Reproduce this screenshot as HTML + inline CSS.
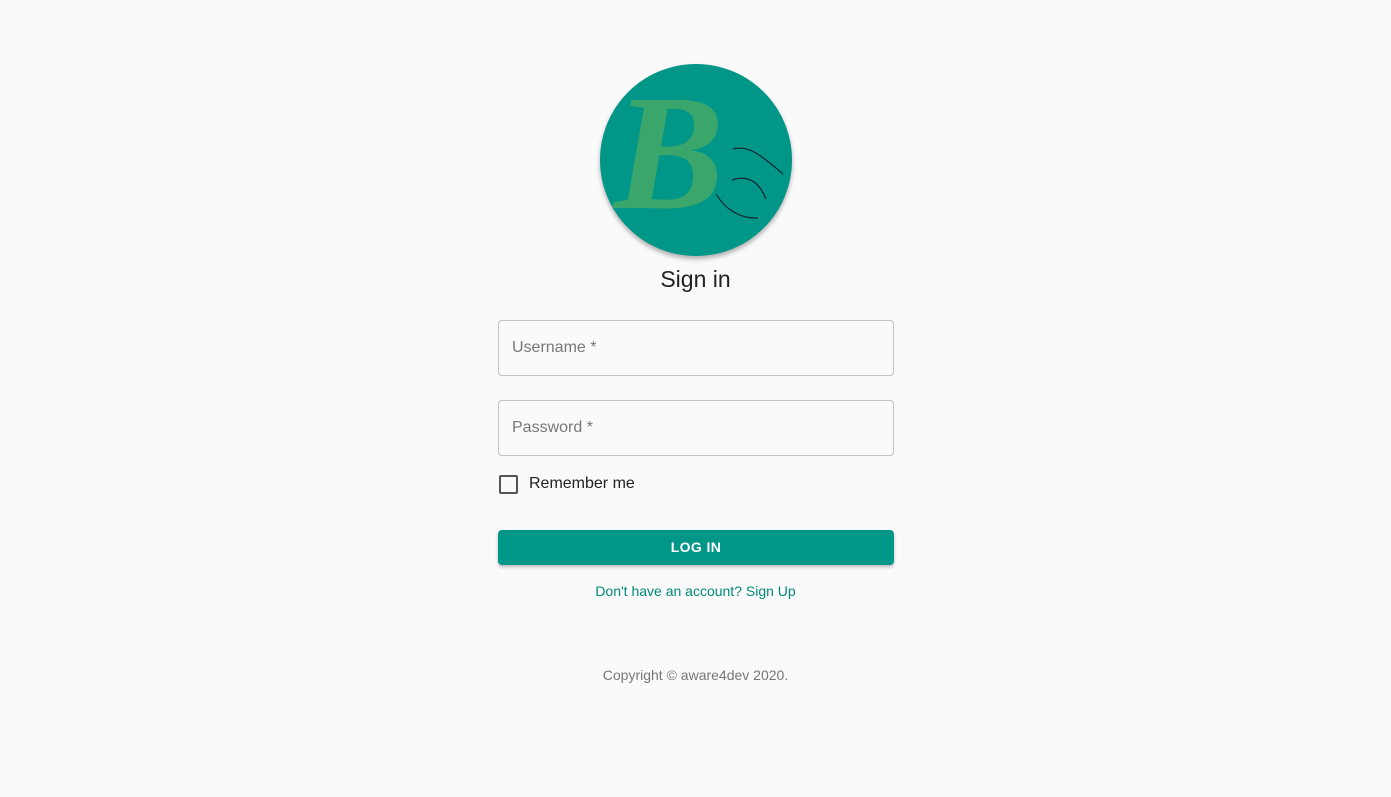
<!DOCTYPE html>
<html><head><meta charset="utf-8"><style>
body{margin:0;background:#fafafa;font-family:"Liberation Sans",Roboto,sans-serif;width:1391px;height:797px;position:relative;overflow:hidden}
.logo{position:absolute;left:600px;top:64px;width:192px;height:192px;border-radius:50%;background:#009688;box-shadow:0 3px 5px rgba(0,0,0,.3)}
h1{position:absolute;top:266px;left:0;width:1391px;text-align:center;margin:0;font-weight:400;font-size:23px;color:#222}
.field{position:absolute;left:498px;width:394px;height:54px;border:1px solid #c4c4c4;border-radius:4px}
.field span{position:absolute;left:13px;top:18px;font-size:16px;color:#777}
.cb{position:absolute;left:499px;top:475px;width:15px;height:15px;border:2px solid #555;border-radius:2px}
.rm{position:absolute;left:529px;top:475px;font-size:16px;color:#222}
.btn{position:absolute;left:498px;top:530px;width:396px;height:35px;background:#009688;border-radius:4px;color:#fff;font-weight:bold;font-size:14px;text-align:center;line-height:35px;box-shadow:0 2px 3px rgba(0,0,0,.25);letter-spacing:.4px}
.link{position:absolute;top:583px;left:0;width:1391px;text-align:center;font-size:14px;color:#00897b}
.copy{position:absolute;top:667px;left:0;width:1391px;text-align:center;font-size:14px;color:#777}
</style></head><body>
<div class="logo"><svg width="192" height="192" viewBox="0 0 192 192">
<text x="14" y="144" font-family="Liberation Serif,serif" font-style="italic" font-weight="bold" font-size="165" fill="#3aa66b">B</text>
<path d="M133 85 C150 80 165 95 183 110" stroke="#123" stroke-width="1.2" fill="none"/>
<path d="M132 116 C150 110 160 120 166 135" stroke="#123" stroke-width="1.2" fill="none"/>
<path d="M116 130 C125 145 140 155 158 154" stroke="#123" stroke-width="1.2" fill="none"/>
</svg></div>
<h1>Sign in</h1>
<div class="field" style="top:320px"><span>Username *</span></div>
<div class="field" style="top:400px"><span>Password *</span></div>
<div class="cb"></div><div class="rm">Remember me</div>
<div class="btn">LOG IN</div>
<div class="link">Don't have an account? Sign Up</div>
<div class="copy">Copyright © aware4dev 2020.</div>
</body></html>
